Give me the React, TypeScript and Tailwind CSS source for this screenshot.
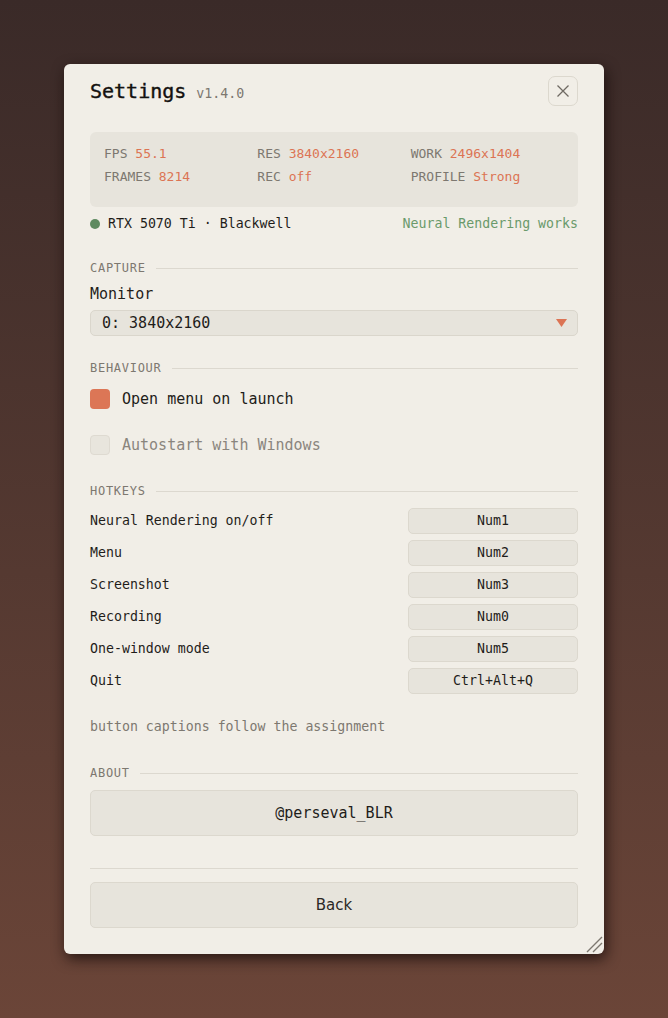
// Settings panel for the capture overlay

const mono = { fontFamily: '"DejaVu Sans Mono", "Liberation Mono", monospace' };

const stats = [
  { label: 'FPS', value: '55.1' },
  { label: 'RES', value: '3840x2160' },
  { label: 'WORK', value: '2496x1404' },
  { label: 'FRAMES', value: '8214' },
  { label: 'REC', value: 'off' },
  { label: 'PROFILE', value: 'Strong' },
];

const hotkeys = [
  { action: 'Neural Rendering on/off', key: 'Num1' },
  { action: 'Menu', key: 'Num2' },
  { action: 'Screenshot', key: 'Num3' },
  { action: 'Recording', key: 'Num0' },
  { action: 'One-window mode', key: 'Num5' },
  { action: 'Quit', key: 'Ctrl+Alt+Q' },
];

function SectionTitle({ title, className }: { title: string; className?: string }) {
  return (
    <div className={`flex items-center gap-[10px] h-4 ${className ?? ''}`}>
      <span className="text-[12px] leading-4 tracking-[0.06em] text-[#7d7870]">{title}</span>
      <div className="flex-1 h-px bg-[#dcd8cf]" />
    </div>
  );
}

export default function App() {
  return (
    <div
      className="min-h-screen flex items-center justify-center bg-linear-to-b from-[#3a2a28] to-[#6b4538]"
      style={mono}
    >
      <div className="relative w-[540px] h-[890px] rounded-md bg-[#f1eee7] px-[26px] pt-3 flex flex-col shadow-[2px_5px_14px_rgba(20,10,8,0.75)]">
        {/* Header */}
        <div className="flex items-center justify-between h-[30px]">
          <div className="flex items-baseline gap-[10px]">
            <span className="text-[20px] text-[#141210] [-webkit-text-stroke:0.4px_#141210]">Settings</span>
            <span className="text-[13.25px] text-[#7d7870]">v1.4.0</span>
          </div>
          <button className="w-[30px] h-[30px] rounded-[7px] border border-[#dcd8ce] flex items-center justify-center">
            <svg width="12" height="12" viewBox="0 0 12 12">
              <path d="M0.5 0.5 L11.5 11.5 M11.5 0.5 L0.5 11.5" stroke="#6f6a63" strokeWidth="1.3" />
            </svg>
          </button>
        </div>

        {/* Live stats */}
        <div className="mt-[26px] rounded-md bg-[#e7e4dc] px-[14px] pt-[13px] pb-[21px] grid grid-cols-3 gap-y-[5px] text-[13px] leading-[18px]">
          {stats.map((s) => (
            <div key={s.label}>
              <span className="text-[#7d7870]">{s.label}</span>{' '}
              <span className="text-[#dc7454]">{s.value}</span>
            </div>
          ))}
        </div>

        {/* GPU line */}
        <div className="mt-2 h-[18px] flex items-center justify-between text-[13.25px]">
          <div className="flex items-center gap-2 text-[#1f1d1a]">
            <span className="w-[10px] h-[10px] rounded-full bg-[#5e8a60]" />
            RTX 5070 Ti · Blackwell
          </div>
          <span className="text-[#6a9a6b]">Neural Rendering works</span>
        </div>

        {/* Capture */}
        <SectionTitle title="CAPTURE" className="mt-[27px]" />
        <div className="mt-2 h-5 text-[15px] leading-5 text-[#1f1d1a]">Monitor</div>
        <div className="mt-[6px] h-[26px] rounded-[5px] border border-[#dad6cc] bg-[#e7e4dc] flex items-center justify-between pl-[11px] pr-[10px] text-[15px] text-[#1f1d1a]">
          <span>0: 3840x2160</span>
          <svg width="11" height="8" viewBox="0 0 11 8">
            <path d="M0 0 L11 0 L5.5 8 Z" fill="#dc7454" />
          </svg>
        </div>

        {/* Behaviour */}
        <SectionTitle title="BEHAVIOUR" className="mt-6" />
        <div className="mt-[13px] h-5 flex items-center gap-3 text-[15px]">
          <span className="w-5 h-5 rounded-[4px] bg-[#dc7656]" />
          <span className="text-[#1f1d1a]">Open menu on launch</span>
        </div>
        <div className="mt-[26px] h-5 flex items-center gap-3 text-[15px]">
          <span className="w-5 h-5 rounded-[4px] bg-[#e8e5dd] border border-[#dedad1]" />
          <span className="text-[#8a857d]">Autostart with Windows</span>
        </div>

        {/* Hotkeys */}
        <SectionTitle title="HOTKEYS" className="mt-7" />
        <div className="mt-[9px] flex flex-col gap-[6px]">
          {hotkeys.map((h) => (
            <div key={h.action} className="flex items-center justify-between h-[26px] text-[13.25px]">
              <span className="text-[#1f1d1a]">{h.action}</span>
              <div className="w-[170px] h-[26px] rounded-[5px] border border-[#dcd8ce] bg-[#e7e4dc] flex items-center justify-center text-[#1f1d1a]">
                {h.key}
              </div>
            </div>
          ))}
        </div>
        <div className="mt-6 h-[18px] text-[13.25px] leading-[18px] text-[#7d7870]">
          button captions follow the assignment
        </div>

        {/* About */}
        <SectionTitle title="ABOUT" className="mt-[29px]" />
        <button className="mt-[9px] h-[46px] rounded-[5px] border border-[#dcd8ce] bg-[#e7e4dc] text-[15px] text-[#1f1d1a]">
          @perseval_BLR
        </button>

        <div className="mt-8 h-px bg-[#dcd8cf]" />

        <button
          className="mt-[13px] h-[46px] rounded-[5px] border border-[#dcd8ce] bg-[#e7e4dc] text-[15px] text-[#2a2825]"
          style={{ fontFamily: '"DejaVu Sans", "Liberation Sans", sans-serif' }}
        >
          Back
        </button>

        {/* Resize grip */}
        <svg className="absolute right-px bottom-px" width="17" height="17" viewBox="0 0 17 17">
          <path d="M1 16 L16 1 M7 16 L16 7" stroke="#7d7870" strokeWidth="1.4" />
        </svg>
      </div>
    </div>
  );
}
